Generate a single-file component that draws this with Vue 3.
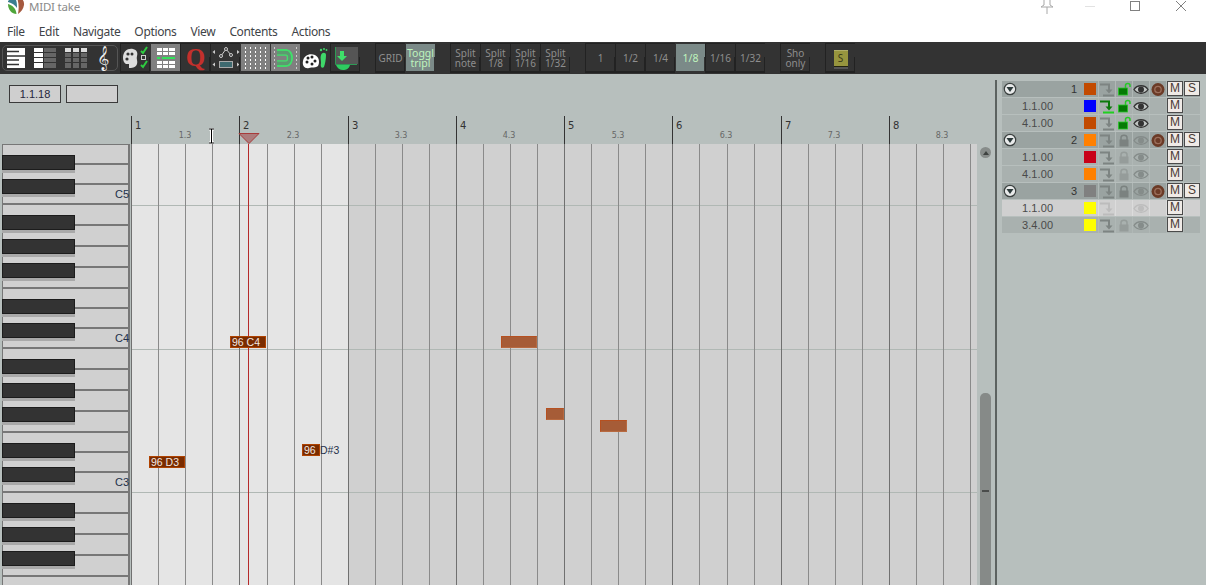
<script setup>
const px = (v) => v + 'px'
const menu = ['File', 'Edit', 'Navigate', 'Options', 'View', 'Contents', 'Actions']
const gridBtns = [
  [{ t: ['GRID'] }, { t: ['Toggl', 'tripl'], on: true }],
  [{ t: ['Split', 'note'] }, { t: ['Split', '1/8'] }, { t: ['Split', '1/16'] }, { t: ['Split', '1/32'] }],
  [{ t: ['1'] }, { t: ['1/2'] }, { t: ['1/4'] }, { t: ['1/8'], on: true }, { t: ['1/16'] }, { t: ['1/32'] }],
  [{ t: ['Sho', 'only'] }]
]
const lineXs = Array.from({ length: 32 }, (_, i) => ({ x: Math.round(131.2 + 27.06 * i) - 131, bar: i % 4 === 0 }))
const bars = [1, 2, 3, 4, 5, 6, 7, 8].map((n, i) => ({ n, x: Math.round(131.2 + 108.24 * i), sub: n + '.3', sx: Math.round(131.2 + 108.24 * i + 53.5) }))
const blackKeys = [155, 179, 215, 239, 263, 299, 323, 359, 383, 407, 443, 467, 503, 527, 551]
const fullLines = [203, 287, 347, 431, 491, 575]
const partLines = [163, 183, 224, 245, 266, 307, 327, 368, 389, 410, 451, 471, 512, 533, 554]
const keyLabels = [{ t: 'C5', y: 187 }, { t: 'C4', y: 331 }, { t: 'C3', y: 475 }]
const hLines = [205, 349, 492]
const notes = [
  { x: 230, y: 336, w: 36, label: '96 C4' },
  { x: 149, y: 456, w: 36, label: '96 D3' },
  { x: 302, y: 444, w: 18, label: '96' },
  { x: 501, y: 336, w: 36, faded: true },
  { x: 546, y: 408, w: 18, faded: true },
  { x: 600, y: 420, w: 27, faded: true }
]
const rows = [
  { g: true, name: '1', color: '#c24a00', arrow: 'dim', lock: 'open', eye: 'dark' },
  { name: '1.1.00', color: '#0000ff', arrow: 'on', lock: 'open', eye: 'dark' },
  { name: '4.1.00', color: '#c24a00', arrow: 'dim', lock: 'open', eye: 'dark' },
  { g: true, name: '2', color: '#ff8000', arrow: 'dim', lock: 'shut', eye: 'faint' },
  { name: '1.1.00', color: '#c80018', arrow: 'dim', lock: 'pale', eye: 'faint' },
  { name: '4.1.00', color: '#ff8000', arrow: 'dim', lock: 'pale', eye: 'faint' },
  { g: true, name: '3', color: '#808080', arrow: 'dim', lock: 'shut', eye: 'faint' },
  { light: true, name: '1.1.00', color: '#ffff00', arrow: 'ghost', lock: '', eye: 'ghost' },
  { name: '3.4.00', color: '#ffff00', arrow: 'dim', lock: 'pale', eye: 'faint' }
]
const arrowColor = { dim: '#7d8482', on: '#0b7a0b', ghost: '#bcbcbc' }
const eyeColor = { dark: '#333', faint: '#858c8a', ghost: '#bdbdbd' }
const lockColor = { shut: '#7b8280', pale: '#959c9a' }
</script>

<template>
  <div class="app">
    <header class="head">
      <div class="titlerow">
        <svg class="logo" width="18" height="14" viewBox="0 0 18 14">
          <path d="M10 -2 C15 -3 17.500 1 17 5 C16.500 9 14 12 11 14 C12 9 12 3 10 -2Z" fill="#a5593f" />
          <path d="M9.500 14 C5 14 1 10 1 4 C5 5 9 8 9.500 14Z" fill="#4fa53b" />
          <path d="M1 1 C3 -1 6 -2 8 -2 C10 1 10 5 10 8 C8 5 5 3 1 2Z" fill="#3b7d8f" />
        </svg>
        <span class="title">MIDI take</span>
        <svg class="winbtns" width="160" height="14" viewBox="0 0 160 14">
          <path d="M17 0 V5 L14 7 H26 L23 5 V0 M20 7 V14" fill="#fff" stroke="#a8a8a8" />
          <path d="M58 6.500 H68" stroke="#e2e2e2" />
          <rect x="103.500" y="1.500" width="9" height="9" fill="none" stroke="#808080" />
          <path d="M149 1 L159 11 M159 1 L149 11" stroke="#808080" />
        </svg>
      </div>
      <nav class="menu">
        <span v-for="m in menu" :key="m">{{ m }}</span>
      </nav>
    </header>

    <div class="toolbar">
      <div class="viewgroup">
        <svg width="18" height="20" viewBox="0 0 18 20" class="vi1">
          <rect width="18" height="20" fill="#fff" />
          <path d="M0 3.500 H12 M0 8 H18 M0 12 H12 M0 16.500 H12" stroke="#333" stroke-width="1.600" />
        </svg>
        <svg width="22" height="20" viewBox="0 0 22 20" class="vi2">
          <g fill="#fff"><rect width="9" height="4" /><rect y="5" width="9" height="4" /><rect y="10" width="9" height="4" /><rect y="15" width="9" height="5" /></g>
          <g fill="#666"><rect x="10" width="12" height="4" /><rect x="10" y="5" width="12" height="4" /><rect x="10" y="10" width="12" height="4" /><rect x="10" y="15" width="12" height="5" /></g>
        </svg>
        <svg width="22" height="20" viewBox="0 0 22 20" class="vi3">
          <g fill="#ddd"><rect width="6" height="4" /><rect x="8" width="6" height="4" /><rect x="16" width="6" height="4" /></g>
          <g fill="#666"><rect y="5" width="6" height="4" /><rect x="8" y="5" width="6" height="4" /><rect x="16" y="5" width="6" height="4" /><rect y="10" width="6" height="4" /><rect x="8" y="10" width="6" height="4" /><rect x="16" y="10" width="6" height="4" /><rect y="15" width="6" height="5" /><rect x="8" y="15" width="6" height="5" /><rect x="16" y="15" width="6" height="5" /></g>
        </svg>
        <span class="clef">𝄞</span>
      </div>

      <div class="tb ic">
        <svg width="30" height="28" viewBox="0 0 30 28">
          <path d="M2 14 C2 7 7 4 12 5 C16 6 17 9 16 12 C15 15 17 17 16 20 C15 24 10 24 8 24 L8 20 L5 20 C3 19 2 16 2 14Z" fill="#ddd" />
          <circle cx="7" cy="10" r="1.600" fill="#333" /><circle cx="11" cy="10" r="1.500" fill="#333" /><circle cx="6" cy="15" r="1.600" fill="#333" />
          <path d="M20 7 L22 9 L26 3 M20 21 L22 23 L26 17" fill="none" stroke="#2ecc40" stroke-width="2" />
          <rect x="20.500" y="11.500" width="4" height="4" fill="none" stroke="#ccc" />
        </svg>
      </div>
      <div class="tb ic sel">
        <svg width="28" height="22" viewBox="0 0 28 22">
          <g fill="#fff"><rect x="5" y="1" width="5" height="3" /><rect x="11" y="1" width="5" height="3" /><rect x="17" y="1" width="6" height="3" /><rect x="5" y="5" width="5" height="3" /><rect x="11" y="5" width="5" height="3" /><rect x="17" y="5" width="6" height="3" /><rect x="5" y="14" width="5" height="3" /><rect x="11" y="14" width="5" height="3" /><rect x="17" y="14" width="6" height="3" /><rect x="5" y="18" width="5" height="3" /><rect x="11" y="18" width="5" height="3" /><rect x="17" y="18" width="6" height="3" /></g>
          <path d="M5 11 H8 M10 11 H23" stroke="#33e05a" stroke-width="2" />
        </svg>
      </div>
      <div class="tb ic"><span class="q">Q</span></div>
      <div class="tb ic">
        <svg width="30" height="26" viewBox="0 0 30 26">
          <path d="M10 11 L15 4 L20 10" fill="none" stroke="#ccc" />
          <circle cx="10" cy="11" r="1.500" fill="#333" stroke="#ccc" /><circle cx="15" cy="4" r="1.500" fill="#333" stroke="#ccc" /><circle cx="20" cy="10" r="1.500" fill="#333" stroke="#ccc" />
          <rect x="8.500" y="16.500" width="13" height="6" fill="#3f6a70" stroke="#aaa" />
          <path d="M4 5 L1.500 7 L4 9Z M26 5 L28.500 7 L26 9Z M4 17.500 L1.500 19.500 L4 21.500Z M26 17.500 L28.500 19.500 L26 21.500Z" fill="#ccc" />
        </svg>
      </div>
      <div class="tb ic sel">
        <svg width="28" height="24" viewBox="0 0 28 24">
          <path d="M3.500 1 V23 M8.500 1 V23 M13.500 1 V23 M18.500 1 V23 M23.500 1 V23" stroke="#fff" stroke-dasharray="2 2" />
        </svg>
      </div>
      <div class="tb ic sel">
        <svg width="28" height="24" viewBox="0 0 28 24">
          <path d="M2.500 1 V23 M24.500 1 V23" stroke="#ccc" stroke-dasharray="2 2" />
          <path d="M5 4 H14 C22 4 22 20 14 20 H5 M5 9 H14 C16 9 16 15 14 15 H5" fill="none" stroke="#3fe06a" stroke-width="1.500" />
          <path d="M5 6.500 H14 C19.500 6.500 19.500 17.500 14 17.500 H5" fill="none" stroke="#5c9a70" stroke-width="3.500" />
          <path d="M5 4 H14 C22 4 22 20 14 20 H5" fill="none" stroke="#3fe06a" stroke-width="1.500" />
        </svg>
      </div>
      <div class="tb ic plain">
        <svg width="30" height="28" viewBox="0 0 30 28">
          <path d="M2 17 C3 11 9 9 14 11 C18 13 19 18 17 22 C15 24 11 23 8 24 C4 25 1 22 2 17Z" fill="#fff" />
          <circle cx="7" cy="14" r="1.500" fill="#222" /><circle cx="11" cy="13" r="1.500" fill="#222" /><circle cx="14" cy="17" r="1.500" fill="#222" /><circle cx="6" cy="18" r="1.500" fill="#222" /><circle cx="11" cy="20" r="1.500" fill="#222" />
          <path d="M20 11 C21 8 25 8 25 11 C25 15 24 20 23 23 C21 25 19 23 20 19 C20 16 19 14 20 11Z" fill="#3fd96a" />
          <circle cx="20" cy="6" r="1.200" fill="#3fd96a" /><circle cx="23" cy="5" r="1" fill="#3fd96a" /><circle cx="25.500" cy="6" r=".9" fill="#3fd96a" />
        </svg>
      </div>
      <div class="tb ic">
        <svg width="30" height="26" viewBox="0 0 30 26">
          <rect x="5" y="2" width="22" height="17" fill="#555" />
          <path d="M4.500 2 V19.500 H26" fill="none" stroke="#2e9a55" />
          <path d="M9 6 H13 V11 H16 L11 16 L6 11 H9Z" fill="#3fe06a" />
          <path d="M5 20 H19 C18 24 15 25 12 25 C9 25 6 23 5 20Z" fill="#2ecc60" />
        </svg>
      </div>

      <div v-for="(grp, gi) in gridBtns" :key="gi" class="btngroup">
        <div v-for="(b, bi) in grp" :key="bi" class="tb txt" :class="{ on: b.on }">
          <span v-for="l in b.t" :key="l">{{ l }}</span>
        </div>
      </div>
      <div class="btngroup">
        <div class="tb txt"><span class="solo">S</span></div>
      </div>
    </div>

    <main class="main">
      <section class="editor">
        <div class="timebar">
          <div class="posboxes">
            <div class="posbox">1.1.18</div>
            <div class="posbox"></div>
          </div>
          <div v-for="b in bars" :key="b.n">
            <i class="barline" :style="{ left: px(b.x) }"></i>
            <span class="barnum" :style="{ left: px(b.x + 4) }">{{ b.n }}</span>
            <span class="barsub" :style="{ left: px(b.sx - 16) }">{{ b.sub }}</span>
          </div>
          <svg class="ibeam" width="7" height="16" viewBox="0 0 7 16">
            <path d="M1 1 H6 M3.500 1 V15 M1 15 H6" stroke="#fff" stroke-width="3" />
            <path d="M1 1 H6 M3.500 1 V15 M1 15 H6" stroke="#000" />
          </svg>
          <svg class="playtri" width="22" height="11" viewBox="0 0 22 11">
            <path d="M1 .5 H21 L11 10.500Z" fill="#ac7c7c" stroke="#a83a3a" />
          </svg>
        </div>
        <div class="body">
          <div class="piano">
            <i v-for="y in fullLines" :key="y" class="kline full" :style="{ top: px(y - 144) }"></i>
            <i v-for="y in partLines" :key="y" class="kline part" :style="{ top: px(y - 144) }"></i>
            <i v-for="y in blackKeys" :key="y" class="bkey" :style="{ top: px(y - 144) }"></i>
            <span v-for="k in keyLabels" :key="k.t" class="klabel" :style="{ top: px(k.y - 144) }">{{ k.t }}</span>
          </div>
          <div class="grid">
            <div class="shade"></div>
            <i v-for="h in hLines" :key="h" class="hline" :style="{ top: px(h - 144) }"></i>
            <i v-for="l in lineXs" :key="l.x" class="vline" :class="{ bar: l.bar }" :style="{ left: px(l.x) }"></i>
            <div v-for="n in notes" :key="n.x" class="note" :class="{ faded: n.faded }"
              :style="{ left: px(n.x - 131), top: px(n.y - 144), width: px(n.w) }">
              <span v-if="n.label">{{ n.label }}</span>
            </div>
            <span class="after" :style="{ left: px(320 - 131), top: px(444 - 144) }">D#3</span>
            <i class="playline"></i>
          </div>
          <div class="vscroll">
            <div class="sbtn"><i></i></div>
            <div class="thumb"><i></i></div>
          </div>
        </div>
      </section>

      <aside class="panel">
        <div class="sep"></div>
        <div class="list">
          <div v-for="(r, i) in rows" :key="i" class="row" :class="{ group: r.g, light: r.light }">
            <div class="namecell">
              <svg v-if="r.g" class="fold" width="14" height="14" viewBox="0 0 14 14">
                <circle cx="7" cy="7" r="5.700" fill="#e8eaea" stroke="#3c4241" stroke-width="1.200" />
                <path d="M3.500 5 H10.500 L7 10Z" fill="#2c3a3a" />
              </svg>
              <span :class="r.g ? 'gnum' : 'cname'">{{ r.name }}</span>
            </div>
            <div class="swatchcell"><i :style="{ background: r.color }"></i></div>
            <div class="cell">
              <svg width="16" height="15" viewBox="0 0 16 15">
                <path d="M1 2.500 H10 V8" fill="none" :stroke="arrowColor[r.arrow]" stroke-width="2" />
                <path d="M6.500 7.500 H13.500 L10 11.500Z" :fill="arrowColor[r.arrow]" />
                <path d="M4 13.500 H15" :stroke="r.arrow === 'on' ? '#20d020' : arrowColor[r.arrow]" stroke-width="2" />
              </svg>
            </div>
            <div class="cell">
              <svg v-if="r.lock === 'open'" width="16" height="15" viewBox="0 0 16 15">
                <path d="M9.500 6 V3.500 C9.500 .8 14 .8 14 3.500 V5" fill="none" stroke="#28c828" stroke-width="1.500" />
                <rect x="2.500" y="6" width="9" height="7" fill="#067a06" stroke="#28c828" stroke-width=".8" />
              </svg>
              <svg v-else-if="r.lock" width="16" height="15" viewBox="0 0 16 15">
                <path d="M5 7 V4.500 C5 1.500 11 1.500 11 4.500 V7" fill="none" :stroke="lockColor[r.lock]" stroke-width="1.500" />
                <rect x="3.500" y="6.500" width="9" height="7" :fill="lockColor[r.lock]" />
              </svg>
            </div>
            <div class="cell">
              <svg width="16" height="15" viewBox="0 0 16 15">
                <path d="M1 7.500 C4 2.500 12 2.500 15 7.500 C12 12.500 4 12.500 1 7.500Z" :fill="r.eye === 'dark' ? '#bfc4c2' : 'none'" :stroke="eyeColor[r.eye]" stroke-width="1.300" />
                <circle cx="8" cy="7.500" r="3" :fill="eyeColor[r.eye]" />
              </svg>
            </div>
            <div class="cell">
              <svg v-if="r.g" width="16" height="15" viewBox="0 0 16 15">
                <circle cx="8" cy="7.500" r="6.500" fill="#6b3a26" />
                <circle cx="8" cy="7.500" r="3.200" fill="none" stroke="#9b6f5c" stroke-width="1.300" />
              </svg>
            </div>
            <div class="cell"><span class="mbtn">M</span></div>
            <div class="cell"><span v-if="r.g" class="mbtn">S</span></div>
          </div>
        </div>
      </aside>
    </main>
  </div>
</template>

<style>
html, body { margin: 0; background: #fff; overflow: hidden; }
</style>

<style scoped>
.app { width: 1206px; height: 585px; display: flex; flex-direction: column; overflow: hidden; font-family: "Noto Sans", "Liberation Sans", sans-serif; background: #fff; }
.head { height: 42px; flex: none; background: #fff; }
.titlerow { height: 14px; display: flex; align-items: center; }
.logo { margin-left: 7px; flex: none; }
.title { margin-left: 4px; font-size: 11.500px; letter-spacing: -.2px; color: #8a8a8a; line-height: 14px; }
.winbtns { margin-left: auto; margin-right: 19px; flex: none; }
.menu { display: flex; gap: 14px; padding: 9px 0 0 7px; font-size: 12px; line-height: 18px; letter-spacing: -.35px; color: #3f4448; }

.toolbar { height: 32px; flex: none; background: #333; display: flex; align-items: center; padding-left: 2px; box-sizing: border-box; }
.viewgroup { width: 116px; height: 26px; box-sizing: border-box; border: 1px solid #555; border-radius: 5px; display: flex; align-items: center; flex: none; margin-right: 2px; }
.vi1 { margin-left: 4px; }
.vi2 { margin-left: 9px; }
.vi3 { margin-left: 9px; }
.clef { margin-left: 10px; color: #eee; font: 21px/24px "DejaVu Sans", sans-serif; }
.tb { width: 30px; height: 30px; box-sizing: border-box; flex: none; position: relative; display: flex; flex-direction: column; align-items: center; justify-content: center; border: 1px solid #222; border-right: 0; border-bottom-width: 2px; }
.tb::after { content: ""; position: absolute; right: 0; bottom: 0; width: 1px; height: 14px; background: #222; }
.ic svg { flex: none; }
.sel { background: #808080; border-color: #333; }
.sel::after { display: none; }
.plain { border-color: #333; }
.plain::after { display: none; }
.q { font: bold 25px/26px "Liberation Serif", serif; color: #c4302c; }
.btngroup { display: flex; margin-left: 15px; flex: none; }
.txt { font-size: 10px; line-height: 10px; color: #8e8e8e; white-space: nowrap; overflow: hidden; }
.txt span { display: block; text-align: center; }
.txt.on { background: #7b8a88; color: #bff5bd; border-color: #333; font-size: 10.500px; }
.txt.on::after { background: #333; }
.solo { width: 14px; height: 15px; line-height: 15px !important; background: #97953e; color: #3a3a18; border-top: 1px solid #b0ae68; box-shadow: 0 1px 0 #23230f, 0 3px 0 #555; font-size: 10px; }

.main { flex: 1; display: flex; min-height: 0; background: #b7bfbd; }
.editor { width: 995px; flex: none; display: flex; flex-direction: column; }
.timebar { height: 70px; flex: none; position: relative; }
.posboxes { display: flex; gap: 5px; padding: 11px 0 0 9px; }
.posbox { width: 52px; height: 18px; box-sizing: border-box; border: 1px solid #3a3a3a; background: #cfcfcf; font: 11px/16px "Liberation Sans", sans-serif; text-align: center; color: #26263c; }
.barline { position: absolute; top: 42px; bottom: 0; width: 1px; background: #333; }
.barnum { position: absolute; top: 46px; font: 10px/12px "DejaVu Sans", sans-serif; color: #333; }
.barsub { position: absolute; top: 57px; width: 32px; text-align: center; font: 8px/10px "DejaVu Sans", sans-serif; color: #666; }
.ibeam { position: absolute; left: 208px; top: 54px; }
.playtri { position: absolute; left: 238px; top: 59px; }

.body { flex: 1; display: flex; min-height: 0; }
.piano { width: 131px; flex: none; position: relative; overflow: hidden; }
.piano::before { content: ""; position: absolute; left: 2px; top: 0; right: 1px; bottom: 0; box-sizing: border-box; background: #d0d0d0; border: 1px solid #777; border-bottom: 0; border-right-width: 2px; }
.kline { position: absolute; right: 2px; height: 2px; background: #777; }
.kline.full { left: 3px; }
.kline.part { left: 75px; }
.bkey { position: absolute; left: 2px; width: 73px; height: 15px; box-sizing: border-box; background: #333; border: 1px solid #1c1c1c; box-shadow: 0 3px 0 #a9a9a9; }
.klabel { position: absolute; right: 2px; font: 11px/14px "Liberation Sans", sans-serif; color: #22304a; }

.grid { width: 846px; flex: none; position: relative; overflow: hidden; background: #e5e5e5; }
.shade { position: absolute; left: 217px; top: 0; right: 0; bottom: 0; background: #d0d0d0; }
.hline { position: absolute; left: 0; right: 0; height: 1px; background: #b0b8b4; }
.vline { position: absolute; top: 0; bottom: 0; width: 1px; background: #8a8a8a; }
.vline.bar { background: #707070; }
.playline { position: absolute; left: 117px; top: 0; bottom: 0; width: 1px; background: #b52a2a; }
.note { position: absolute; height: 12px; box-sizing: border-box; background: #7a2c00; border: 1px solid #b04200; overflow: hidden; font: 10.500px/11px "Liberation Sans", sans-serif; color: #f2e8e2; white-space: nowrap; padding-left: 1px; z-index: 1; }
.note.faded { background: #a65c37; border-color: #b65020 #b86a40 #b86a40 #b65020; }
.after { position: absolute; font: 10.500px/12px "Liberation Sans", sans-serif; color: #26304a; z-index: 1; }

.vscroll { flex: 1; display: flex; flex-direction: column; align-items: flex-start; padding: 3px 0 0 3px; box-sizing: border-box; }
.sbtn { width: 11px; height: 11px; border-radius: 50%; background: #878c8a; display: flex; align-items: center; justify-content: center; }
.sbtn i { border: 3px solid transparent; border-top: 0; border-bottom: 4px solid #3e4240; }
.thumb { margin-top: auto; width: 11px; height: 192px; background: #868a88; border-radius: 5px 5px 0 0; display: flex; align-items: center; justify-content: center; }
.thumb i { width: 7px; height: 2px; margin-top: 3px; background: #4a4c4b; }

.panel { flex: 1; display: flex; min-width: 0; }
.sep { width: 2px; margin-top: 6px; background: #5c6260; flex: none; }
.list { margin: 7px 0 0 5px; width: 198px; flex: none; }
.row { height: 17px; box-sizing: border-box; display: grid; grid-template-columns: 81px 15px repeat(6, 17px); background: #a9b1af; border-bottom: 1px solid #b7bfbd; }
.row.group { background: #9aa3a1; }
.row.light { background: #d0d0d0; }
.namecell { display: flex; align-items: center; font: 11px/16px "Liberation Sans", sans-serif; color: #4a4a4a; }
.fold { margin-left: 1px; flex: none; }
.gnum { margin-left: auto; margin-right: 6px; color: #333; }
.cname { margin-left: 20px; letter-spacing: .1px; }
.swatchcell { padding: 2px 0 0 1px; }
.swatchcell i { display: block; width: 12px; height: 12px; }
.cell { display: flex; align-items: center; justify-content: center; box-sizing: border-box; border-left: 1px solid #b0b8b6; }
.light .cell { border-left-color: #dcdcdc; }
.mbtn { width: 16px; height: 15px; margin-top: -1px; box-sizing: border-box; border: 1px solid #4a4a4a; background: #efeae6; font: 12px/13px "Liberation Sans", sans-serif; color: #4a3a34; text-align: center; flex: none; }
</style>
